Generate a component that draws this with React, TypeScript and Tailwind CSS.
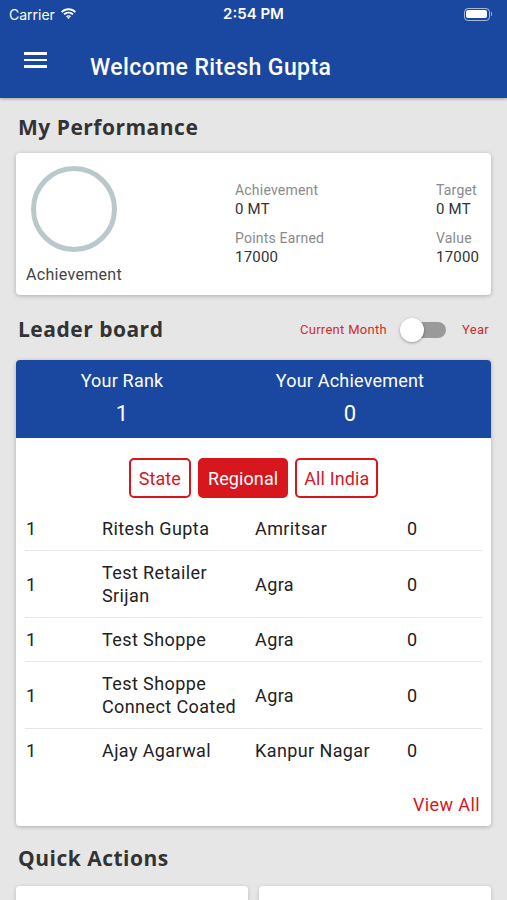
import React from "react";

const rows = [
  { r: "1", n: "Ritesh Gupta", c: "Amritsar", v: "0" },
  { r: "1", n: "Test Retailer Srijan", c: "Agra", v: "0" },
  { r: "1", n: "Test Shoppe", c: "Agra", v: "0" },
  { r: "1", n: "Test Shoppe Connect Coated", c: "Agra", v: "0" },
  { r: "1", n: "Ajay Agarwal", c: "Kanpur Nagar", v: "0" },
];

export default function App() {
  return (
    <div className="w-[507px] h-[900px] overflow-hidden bg-[#e6e6e6] font-['Roboto',sans-serif]">
      {/* Header */}
      <div className="bg-[#1a47a0] h-[98px] shadow-[0_1px_3px_rgba(0,0,0,0.3)] relative">
        <div className="h-[28px] flex items-center justify-between px-[9px] text-white font-['Inter',sans-serif]">
          <div className="flex items-center gap-[5px] w-[120px]">
            <span className="text-[14px]">Carrier</span>
            <svg width="17" height="12" viewBox="0 0 17 12">
              <path d="M8.5 2.2c2.4 0 4.6.9 6.2 2.5l1.3-1.3C14 1.4 11.4.3 8.5.3S3 1.4 1 3.4l1.3 1.3C3.9 3.1 6.1 2.2 8.5 2.2z" fill="white" />
              <path d="M8.5 5.6c1.5 0 2.8.6 3.8 1.5l1.3-1.3C12.3 4.5 10.5 3.7 8.5 3.7s-3.8.8-5.1 2.1l1.3 1.3c1-.9 2.3-1.5 3.8-1.5z" fill="white" />
              <path d="M8.5 8.9c.6 0 1.1.2 1.5.6L8.5 11 7 9.5c.4-.4.9-.6 1.5-.6z" fill="white" />
              <path d="M8.5 7.2c1 0 1.9.4 2.5 1l-1 1c-.4-.4-.9-.6-1.5-.6s-1.1.2-1.5.6l-1-1c.6-.6 1.5-1 2.5-1z" fill="white" />
            </svg>
          </div>
          <span className="text-[15px] font-semibold">2:54 PM</span>
          <div className="w-[120px] flex justify-end pr-[6px]">
            <div className="flex items-center">
              <div className="w-[26px] h-[13px] rounded-[4px] border border-white/60 p-[1.5px]">
                <div className="w-full h-full bg-white rounded-[2px]" />
              </div>
              <div className="w-[1.5px] h-[4px] bg-white/60 rounded-r ml-[1px]" />
            </div>
          </div>
        </div>
        <div className="flex items-start h-[70px]">
          <div className="w-[90px] pl-[24px] pt-[24px] flex flex-col gap-[4px]">
            <div className="w-[23px] h-[2.5px] bg-white" />
            <div className="w-[23px] h-[2.5px] bg-white" />
            <div className="w-[23px] h-[2.5px] bg-white" />
          </div>
          <span className="text-white text-[23px] font-medium tracking-[0.4px] pt-[26px] leading-[28px]">Welcome Ritesh Gupta</span>
        </div>
      </div>

      <div className="px-[16px]">
        {/* My Performance */}
        <h2 className="pt-[14px] pl-[2px] h-[55px] text-[21px] font-bold text-[#333] font-['Open_Sans',sans-serif] tracking-[0.5px]">My Performance</h2>
        <div className="bg-white rounded-[4px] shadow-[0_1px_4px_rgba(0,0,0,0.25)] h-[142px] flex">
          <div className="w-[219px] pl-[10px] pt-[12px]">
            <div className="w-[96px] flex flex-col items-center">
              <svg width="88" height="88" viewBox="0 0 88 88">
                <circle cx="44" cy="44" r="40.5" fill="none" stroke="#b9c9cb" strokeWidth="5" />
              </svg>
              <span className="mt-[10px] text-[16px] tracking-[0.3px] text-[#444] whitespace-nowrap">Achievement</span>
            </div>
          </div>
          <div className="flex-1 pt-[28px] text-[15px] tracking-[0.2px]">
            <div className="text-[14px] text-[#8a8a8a] leading-[19px]">Achievement</div>
            <div className="text-[#333] leading-[19px]">0 MT</div>
            <div className="text-[14px] text-[#8a8a8a] leading-[19px] mt-[10px]">Points Earned</div>
            <div className="text-[#333] leading-[19px]">17000</div>
          </div>
          <div className="w-[55px] pt-[28px] text-[15px] tracking-[0.2px]">
            <div className="text-[14px] text-[#8a8a8a] leading-[19px]">Target</div>
            <div className="text-[#333] leading-[19px]">0 MT</div>
            <div className="text-[14px] text-[#8a8a8a] leading-[19px] mt-[10px]">Value</div>
            <div className="text-[#333] leading-[19px]">17000</div>
          </div>
        </div>

        {/* Leader board */}
        <div className="h-[65px] flex items-center justify-between pl-[2px] pt-[5px]">
          <h2 className="text-[21px] font-bold text-[#333] font-['Open_Sans',sans-serif] tracking-[0.5px]">Leader board</h2>
          <div className="flex items-center text-[13px] tracking-[0.3px] text-[#d42a2f] pr-[2px]">
            <span>Current Month</span>
            <div className="relative w-[46px] h-[24px] ml-[13px] mr-[16px]">
              <div className="absolute left-[6px] right-0 top-[4px] h-[16px] rounded-full bg-[#9a9a9a]" />
              <div className="absolute left-0 top-0 w-[24px] h-[24px] rounded-full bg-white shadow-[0_1px_3px_rgba(0,0,0,0.35)]" />
            </div>
            <span>Year</span>
          </div>
        </div>

        <div className="rounded-[4px] bg-white shadow-[0_1px_4px_rgba(0,0,0,0.25)] overflow-hidden">
          <div className="bg-[#1a47a0] h-[78px] flex text-white tracking-[0.2px]">
            <div className="w-[212px] flex flex-col items-center pt-[9px]">
              <span className="text-[18px] leading-[24px]">Your Rank</span>
              <span className="text-[22px] leading-[30px] mt-[6px]">1</span>
            </div>
            <div className="w-[244px] flex flex-col items-center pt-[9px]">
              <span className="text-[18px] leading-[24px]">Your Achievement</span>
              <span className="text-[22px] leading-[30px] mt-[6px]">0</span>
            </div>
          </div>
          <div className="flex justify-center gap-[7px] pt-[20px] pb-[9px] tracking-[0.1px]">
            <div className="h-[40px] px-[8px] flex items-center border-2 border-[#d7161e] rounded-[5px] text-[#d7161e] text-[18px]">State</div>
            <div className="h-[40px] px-[8px] flex items-center border-2 border-[#d7161e] bg-[#d7161e] rounded-[5px] text-white text-[18px]">Regional</div>
            <div className="h-[40px] px-[7px] flex items-center border-2 border-[#d7161e] rounded-[5px] text-[#d7161e] text-[18px]">All India</div>
          </div>
          <div className="px-[9px]">
            {rows.map((row, i) => (
              <div
                key={i}
                className={`grid grid-cols-[77px_153px_152px_1fr] items-center py-[10px] text-[18px] leading-[23px] tracking-[0.4px] text-[#222] ${i < rows.length - 1 ? "border-b border-[#e6e6e6]" : ""}`}
              >
                <span className="pl-[1px]">{row.r}</span>
                <span className="pr-[12px]">{row.n}</span>
                <span>{row.c}</span>
                <span>{row.v}</span>
              </div>
            ))}
          </div>
          <div className="flex justify-end pr-[11px] pt-[21px] pb-[10px]">
            <span className="text-[18px] leading-[23px] tracking-[0.4px] text-[#d7161e]">View All</span>
          </div>
        </div>

        <h2 className="pt-[17px] pl-[2px] h-[60px] text-[21px] font-bold text-[#333] font-['Open_Sans',sans-serif] tracking-[0.5px]">Quick Actions</h2>
        <div className="grid grid-cols-2 gap-[11px]">
          <div className="bg-white rounded-[4px] h-[80px] shadow-[0_1px_4px_rgba(0,0,0,0.2)]" />
          <div className="bg-white rounded-[4px] h-[80px] shadow-[0_1px_4px_rgba(0,0,0,0.2)]" />
        </div>
      </div>
    </div>
  );
}
